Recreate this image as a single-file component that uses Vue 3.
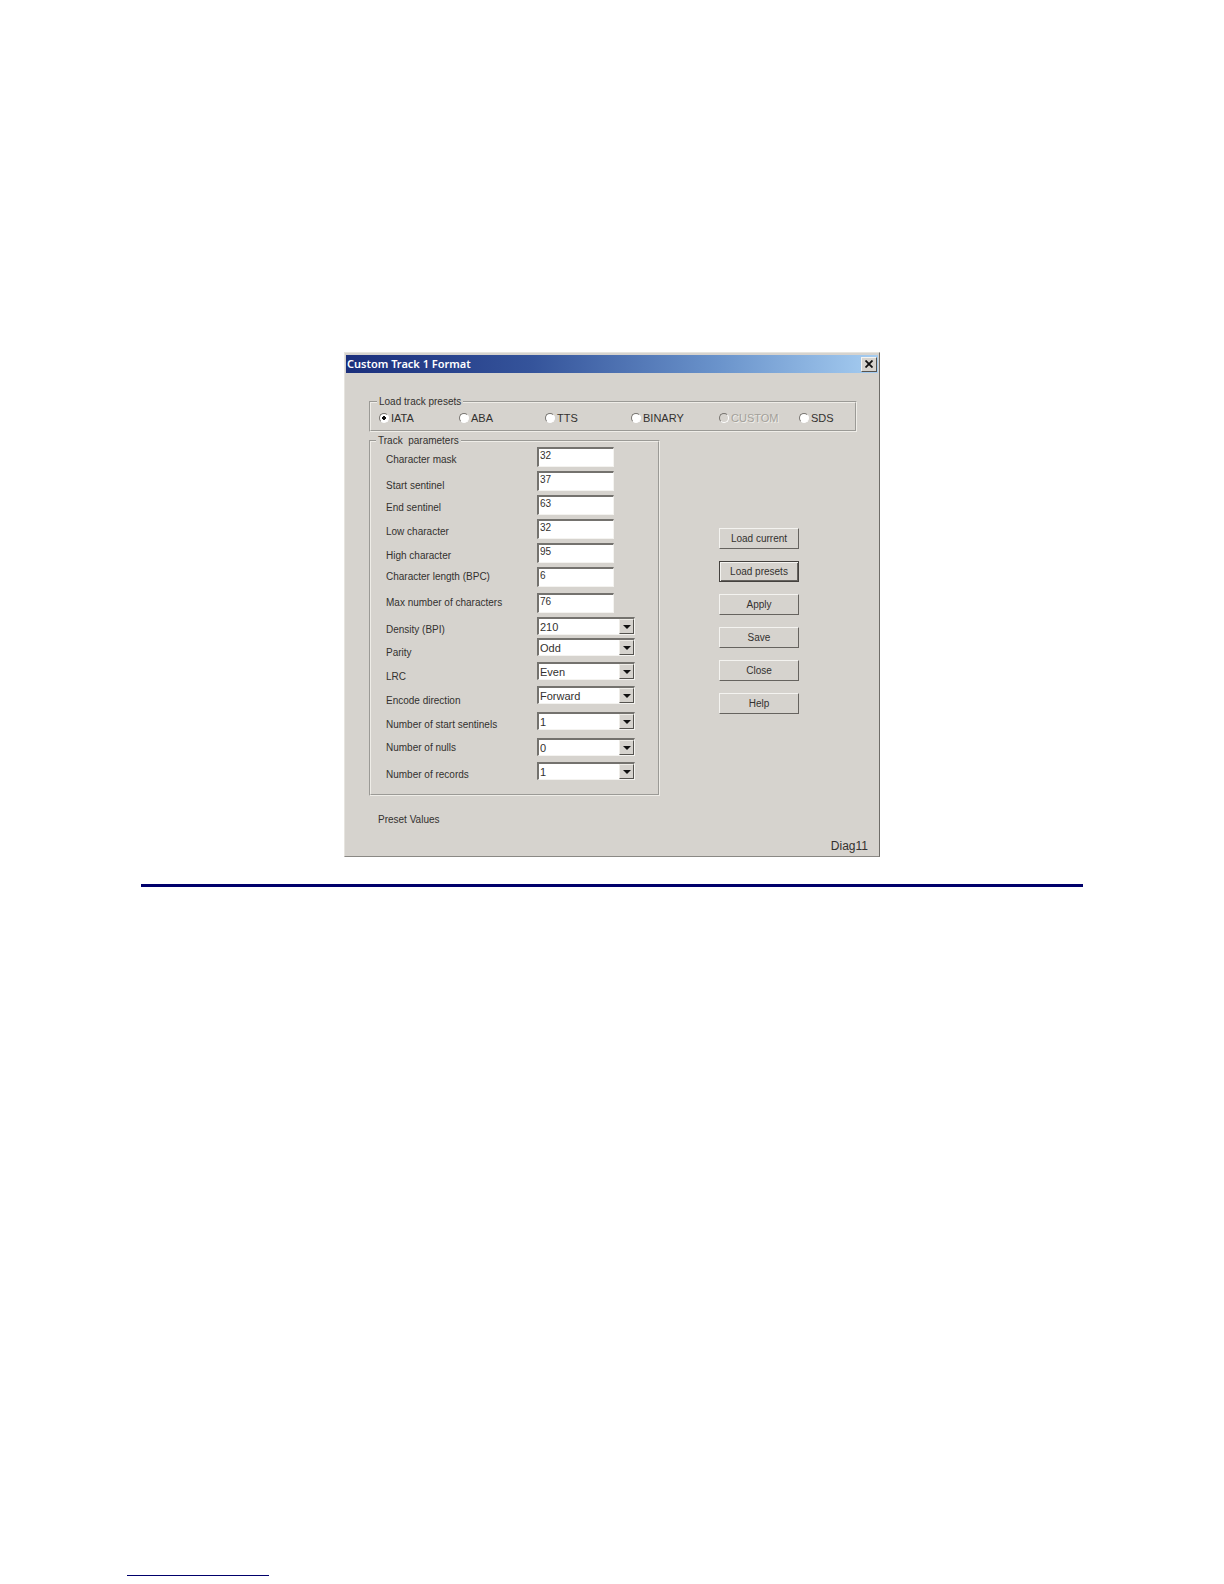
<template>
  <div class="page">
    <form class="dialog" @submit.prevent>
      <div class="title-bar">
        <h1 class="title">Custom Track 1 Format</h1>
        <button type="button" class="close-btn" aria-label="Close window">
          <svg width="8" height="8" viewBox="0 0 8 8">
            <path d="M0.5 0.5L7.5 7.5M7.5 0.5L0.5 7.5" stroke="#111" stroke-width="1.8" />
          </svg>
        </button>
      </div>

      <div class="body">
        <fieldset class="group presets">
          <legend>Load track presets</legend>
          <label
            v-for="item in presets"
            :key="item.name"
            class="preset"
            :class="{ disabled: item.disabled }"
          >
            <input
              v-model="preset"
              type="radio"
              name="preset"
              :value="item.name"
              :disabled="item.disabled"
            />
            <span>{{ item.name }}</span>
          </label>
        </fieldset>

        <div class="columns">
          <fieldset class="group params">
            <legend>Track&nbsp; parameters</legend>
            <div
              v-for="field in fields"
              :key="field.id"
              class="row"
              :class="[field.size, field.align]"
            >
              <label :for="field.id">{{ field.label }}</label>
              <div v-if="field.options" class="combo">
                <select :id="field.id" v-model="field.value">
                  <option v-for="opt in field.options" :key="opt">{{ opt }}</option>
                </select>
                <span class="arrow">
                  <svg width="8" height="4" viewBox="0 0 8 4">
                    <path d="M0 0H8L4 4Z" fill="#111" />
                  </svg>
                </span>
              </div>
              <input v-else :id="field.id" v-model="field.value" type="text" class="text-box" />
            </div>
          </fieldset>

          <div class="actions">
            <button
              v-for="name in actions"
              :key="name"
              type="button"
              class="btn"
              :class="{ default: name === 'Load presets' }"
            >
              {{ name }}
            </button>
          </div>
        </div>

        <p class="status">Preset Values</p>
      </div>
      <p class="diag">Diag11</p>
    </form>

    <hr class="divider" />
    <div class="footnote-line"></div>
  </div>
</template>

<script setup>
import { ref } from "vue";

const preset = ref("IATA");

const presets = [
  { name: "IATA" },
  { name: "ABA" },
  { name: "TTS" },
  { name: "BINARY" },
  { name: "CUSTOM", disabled: true },
  { name: "SDS" },
];

const fields = ref([
  { id: "mask", label: "Character mask", value: "32" },
  { id: "start", label: "Start sentinel", value: "37", align: "low" },
  { id: "end", label: "End sentinel", value: "63" },
  { id: "lowChar", label: "Low character", value: "32" },
  { id: "highChar", label: "High character", value: "95" },
  { id: "bpc", label: "Character length (BPC)", value: "6", size: "tall", align: "high" },
  { id: "max", label: "Max number of characters", value: "76", align: "high" },
  { id: "bpi", label: "Density (BPI)", value: "210", options: ["210", "75"], size: "short" },
  { id: "parity", label: "Parity", value: "Odd", options: ["Odd", "Even"], align: "low" },
  { id: "lrc", label: "LRC", value: "Even", options: ["Even", "Odd"], align: "low" },
  {
    id: "direction",
    label: "Encode direction",
    value: "Forward",
    options: ["Forward", "Reverse"],
    size: "tall",
    align: "low",
  },
  { id: "starts", label: "Number of start sentinels", value: "1", options: ["1", "2"], size: "tall" },
  { id: "nulls", label: "Number of nulls", value: "0", options: ["0", "1"], align: "high" },
  { id: "records", label: "Number of records", value: "1", options: ["1", "2"] },
]);

const actions = ["Load current", "Load presets", "Apply", "Save", "Close", "Help"];
</script>

<style>
body {
  margin: 0;
  background: #fff;
}
</style>

<style scoped>
.page {
  box-sizing: border-box;
  min-height: 100vh;
  padding: 352px 127px 8px;
  display: flex;
  flex-direction: column;
  font-family: "Liberation Sans", Arial, sans-serif;
  font-size: 10px;
  color: #33312f;
}

.dialog {
  box-sizing: border-box;
  width: 100%;
  max-width: 536px;
  margin: 0 auto;
  padding: 2px 1px 3px;
  background: #d6d3ce;
  border: 1px solid #e6e4df;
  border-right-color: #6f6d69;
  border-bottom-color: #8a8884;
}

.title-bar {
  display: flex;
  align-items: center;
  justify-content: space-between;
  height: 18px;
  padding: 0 1px;
  background: linear-gradient(to right, #1b2f7c, #35549b 35%, #6a93cb 70%, #a6cdf1);
}

.title {
  margin: 0;
  font-family: "Noto Sans", sans-serif;
  font-size: 11px;
  line-height: 18px;
  font-weight: 600;
  color: #fff;
}

.close-btn {
  display: flex;
  align-items: center;
  justify-content: center;
  width: 16px;
  height: 15px;
  padding: 0;
  background: #d6d3ce;
  border: 1px solid #f4f3f0;
  border-right-color: #55534f;
  border-bottom-color: #55534f;
}

.body {
  padding: 23px 21px 0 23px;
}

.group {
  min-width: 0;
  margin: 0;
  border: 2px groove #efede8;
}

.group legend {
  padding: 0 2px;
  line-height: 12px;
}

.presets {
  display: grid;
  grid-template-columns: 80px 86px 86px 88px 80px auto;
  padding: 3px 8px 5px;
}

.presets legend {
  margin-left: -2px;
}

.preset {
  display: flex;
  align-items: center;
  gap: 2px;
  font-size: 11px;
  line-height: 14px;
}

.preset input {
  appearance: none;
  box-sizing: border-box;
  width: 10px;
  height: 10px;
  margin: 0;
  border: 1px solid #fff;
  border-top-color: #77746f;
  border-left-color: #77746f;
  border-radius: 50%;
  background: #fff;
}

.preset input:checked {
  background: radial-gradient(circle, #111 0 2px, #fff 2px);
}

.preset.disabled {
  color: #a3a09a;
  text-shadow: 1px 1px #efede8;
}

.preset.disabled input {
  background: #d6d3ce;
}

.columns {
  display: flex;
  align-items: flex-start;
  gap: 59px;
  margin-top: 3px;
}

.params {
  box-sizing: border-box;
  width: 291px;
  padding: 0 15px 8px;
}

.params legend {
  margin-left: -10px;
}

.row {
  display: grid;
  grid-template-columns: 151px 1fr;
  align-items: start;
  height: 24px;
}

.row label {
  line-height: 20px;
  padding-top: 3px;
}

.row.low label {
  padding-top: 5px;
}

.row.high label {
  padding-top: 0;
}

.row.tall {
  height: 26px;
}

.row.short {
  height: 21px;
}

.text-box,
.combo {
  box-sizing: border-box;
  border: 1px solid #f4f3f0;
  border-top: 2px solid #74726e;
  border-left: 2px solid #74726e;
  background: #fff;
}

.text-box {
  width: 77px;
  height: 20px;
  padding: 0 1px 4px;
  border-radius: 0;
  font: inherit;
  color: inherit;
  outline: none;
}

.combo {
  position: relative;
  width: 98px;
  height: 18px;
}

.combo select {
  appearance: none;
  display: block;
  width: 100%;
  height: 15px;
  padding: 0 1px;
  border: none;
  background: transparent;
  font: inherit;
  font-size: 11px;
  line-height: 14px;
  color: inherit;
  outline: none;
}

.arrow {
  position: absolute;
  top: 0;
  right: 0;
  bottom: 0;
  box-sizing: border-box;
  width: 15px;
  display: flex;
  align-items: center;
  justify-content: center;
  background: #d6d3ce;
  border: 1px solid #efede8;
  border-right-color: #55534f;
  border-bottom-color: #55534f;
  pointer-events: none;
}

.actions {
  display: flex;
  flex-direction: column;
  gap: 12px;
  padding-top: 93px;
}

.btn {
  width: 80px;
  height: 21px;
  padding: 0;
  background: #d6d3ce;
  border: 1px solid #f4f3f0;
  border-right: 1px solid #66635f;
  border-bottom: 1px solid #66635f;
  font: inherit;
  color: inherit;
}

.btn.default {
  border: 1px solid #44413e;
  box-shadow: inset 1px 1px #f4f3f0, inset -1px -1px #66635f;
}

.status {
  margin: 17px 0 0 9px;
  line-height: 14px;
}

.diag {
  margin: 12px 10px 0;
  font-size: 12px;
  line-height: 14px;
  text-align: right;
}

.divider {
  box-sizing: border-box;
  align-self: stretch;
  height: 3px;
  margin: 27px 14px 0;
  border: none;
  background: #00006b;
}

.footnote-line {
  width: 142px;
  height: 1px;
  margin-top: auto;
  background: #00006b;
}
</style>
